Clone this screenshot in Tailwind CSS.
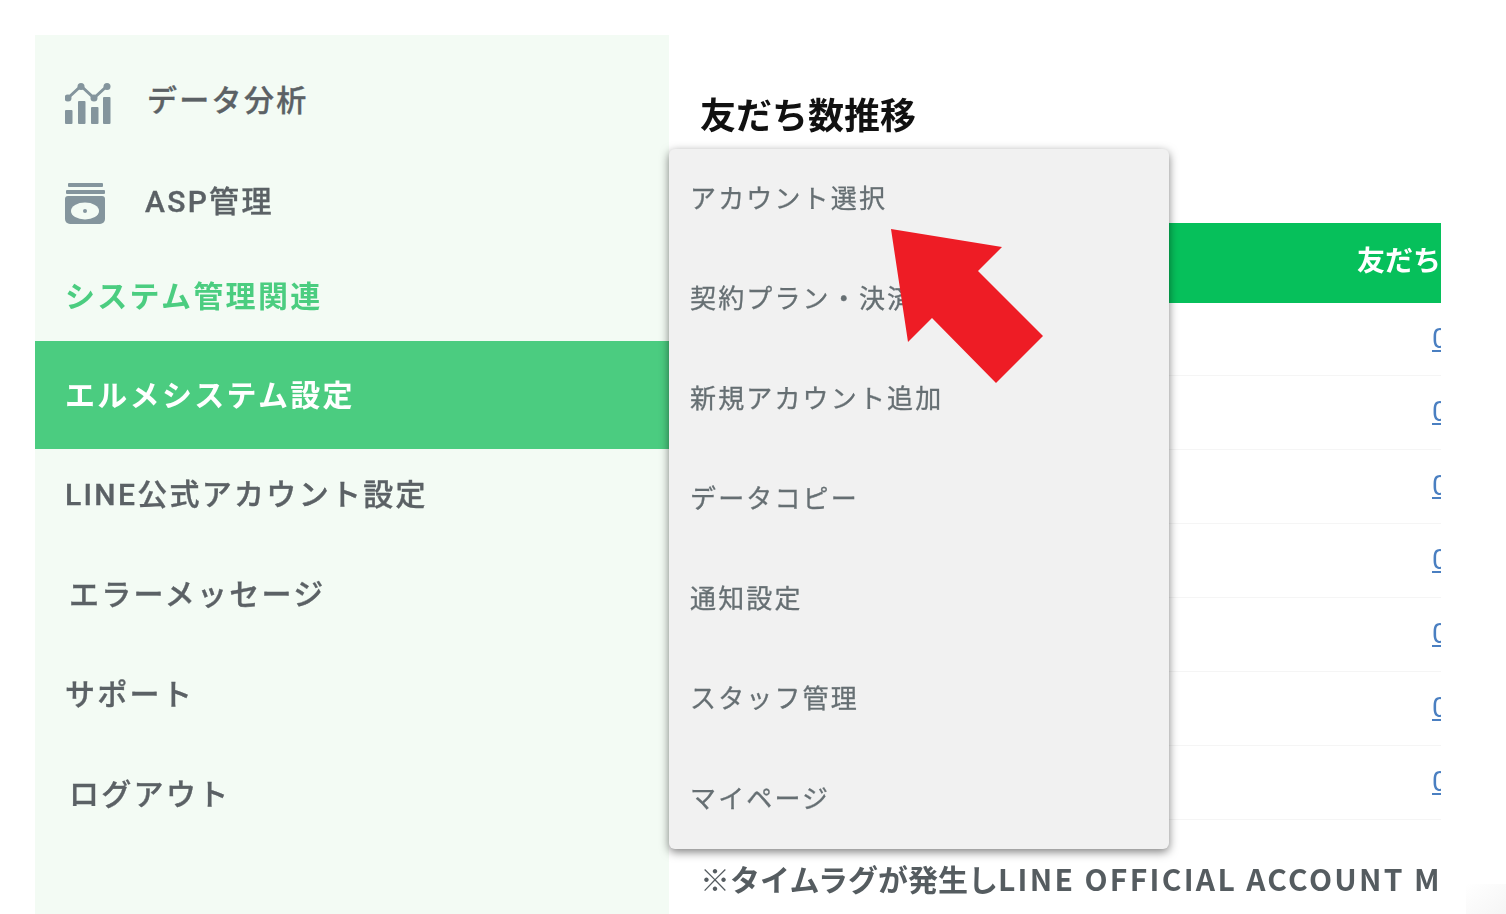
<!DOCTYPE html>
<html lang="ja">
<head>
<meta charset="UTF-8">
<title>エルメシステム設定</title>
<script src="https://cdn.jsdelivr.net/npm/@tailwindcss/browser@4"></script>
</head>
<body class="bg-white font-['Roboto','Noto_Sans_CJK_JP',sans-serif]">
<div class="relative w-[1506px] h-[914px] overflow-hidden blur-[0.6px]">
  <div class="flex pl-[35px] pt-[35px] h-full">
    <!-- sidebar -->
    <nav class="w-[634px] h-full bg-[#f3fbf4] pt-[16px] text-[30px] leading-[100px] tracking-[2.3px] font-medium text-[#5b6165] [-webkit-text-stroke:0.35px_#5b6165]">
      <div class="flex items-center h-[100px] pl-[30px]">
        <svg class="w-[47px] h-[42px] mt-[6px] mr-[35px]" viewBox="65 84 47 42" fill="#84959d" stroke="none">
          <rect x="65" y="111" width="7.5" height="14" rx="1"/>
          <rect x="78" y="102" width="7.5" height="23" rx="1"/>
          <rect x="91" y="108" width="7.5" height="17" rx="1"/>
          <rect x="103" y="98" width="7.5" height="27" rx="1"/>
          <path d="M68 99 81 87 94 99 107 87" fill="none" stroke="#84959d" stroke-width="3"/>
          <circle cx="68" cy="99" r="3.5"/><circle cx="81" cy="87.500" r="3.5"/><circle cx="94" cy="99" r="3.5"/><circle cx="107" cy="87.500" r="3.5"/>
        </svg>
        <span>データ分析</span>
      </div>
      <div class="flex items-center h-[101px] pl-[30px]">
        <svg class="w-[41px] h-[42px] mt-[4px] mr-[39px]" viewBox="65 183 41 42" stroke="none">
          <rect x="68" y="183" width="35" height="4" rx="1" fill="#84959d"/>
          <rect x="66" y="190" width="39" height="4" rx="1" fill="#84959d"/>
          <path d="M65 199a3 3 0 0 1 3-3h34a3 3 0 0 1 3 3v20a5 5 0 0 1-5 5H70a5 5 0 0 1-5-5z" fill="#84959d"/>
          <ellipse cx="85" cy="211" rx="14" ry="8.5" fill="#f3fbf4"/>
          <circle cx="85" cy="211" r="2" fill="#84959d"/>
        </svg>
        <span>ASP管理</span>
      </div>
      <div class="h-[89px] leading-[89px] pl-[30px] font-bold text-[#4bcd80] [-webkit-text-stroke:0]">システム管理関連</div>
      <div class="h-[108px] leading-[110px] pl-[30px] font-bold text-white bg-[#4bcc80] [-webkit-text-stroke:0]">エルメシステム設定</div>
      <div class="h-[96px] leading-[92px] pl-[30px]">LINE公式アカウント設定</div>
      <div class="h-[100px] pl-[34px]">エラーメッセージ</div>
      <div class="h-[100px] pl-[30px]">サポート</div>
      <div class="h-[100px] pl-[34px]">ログアウト</div>
    </nav>
    <!-- main -->
    <main class="w-[772px] h-full overflow-hidden pl-[31px] whitespace-nowrap">
      <h1 class="h-[188px] pt-[54px] text-[36px] leading-[48px] font-bold text-[#111111] font-['Noto_Sans_CJK_JP',sans-serif]">友だち数推移</h1>
      <div class="w-[741px] overflow-hidden">
        <div class="h-[80px] bg-[#06c05b] pl-[657px] text-[28px] leading-[78px] font-bold text-white">友だち</div>
        <div class="h-[73px] border-b border-[#f5f5f5] pl-[732px] text-[28px] leading-[72px] text-[#4a7fc1] underline">0</div>
        <div class="h-[74px] border-b border-[#f5f5f5] pl-[732px] text-[28px] leading-[72px] text-[#4a7fc1] underline">0</div>
        <div class="h-[74px] border-b border-[#f5f5f5] pl-[732px] text-[28px] leading-[72px] text-[#4a7fc1] underline">0</div>
        <div class="h-[74px] border-b border-[#f5f5f5] pl-[732px] text-[28px] leading-[72px] text-[#4a7fc1] underline">0</div>
        <div class="h-[74px] border-b border-[#f5f5f5] pl-[732px] text-[28px] leading-[72px] text-[#4a7fc1] underline">0</div>
        <div class="h-[74px] border-b border-[#f5f5f5] pl-[732px] text-[28px] leading-[72px] text-[#4a7fc1] underline">0</div>
        <div class="h-[74px] border-b border-[#f5f5f5] pl-[732px] text-[28px] leading-[72px] text-[#4a7fc1] underline">0</div>
      </div>
      <p class="mt-[36px] w-[741px] overflow-hidden text-[30px] leading-[44px] font-bold text-[#555c60] font-['Noto_Sans_CJK_JP',sans-serif]">※タイムラグが発生し<span class="tracking-[2.3px]">LINE OFFICIAL ACCOUNT M</span></p>
    </main>
  </div>
  <!-- dropdown -->
  <ul class="absolute left-[669px] top-[149px] w-[500px] h-[700px] rounded-[6px] bg-[#f1f1f1] shadow-[0_3px_10px_rgba(0,0,0,0.5)] pl-[21px] text-[26px] leading-[100px] tracking-[2.15px] text-[#666f73] [-webkit-text-stroke:0.3px_#666f73]">
    <li class="h-[100px]">アカウント選択</li>
    <li class="h-[100px]">契約プラン・決済</li>
    <li class="h-[100px]">新規アカウント追加</li>
    <li class="h-[100px]">データコピー</li>
    <li class="h-[100px]">通知設定</li>
    <li class="h-[100px]">スタッフ管理</li>
    <li class="h-[100px]">マイページ</li>
  </ul>
  <!-- red arrow -->
  <svg class="absolute left-0 top-0 w-[1506px] h-[914px]" viewBox="0 0 1506 914">
    <path d="M891 229 1002 247 978 271 1043 336 996 383 932 318 908 342z" fill="#ee1c25"/>
  </svg>
  <div class="absolute right-0 bottom-0 w-[40px] h-[30px] bg-gradient-to-br from-white to-[#f5f5f5]"></div>
</div>
</body>
</html>
